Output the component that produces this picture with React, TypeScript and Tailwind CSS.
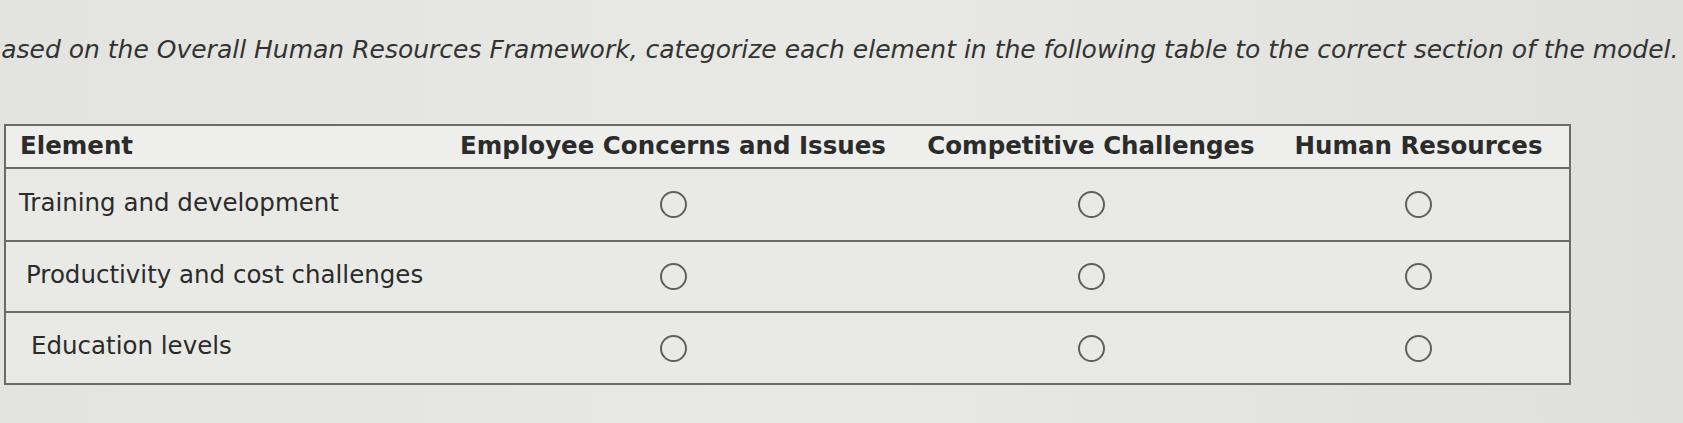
import React from "react";

const rows = [
  { label: "Training and development", h: "h-[73px]", pl: "pl-[13px]" },
  { label: "Productivity and cost challenges", h: "h-[71px]", pl: "pl-[20px]" },
  { label: "Education levels", h: "h-[70px]", pl: "pl-[25px]" },
];

function Radio() {
  return <span className="inline-block w-[27px] h-[27px] rounded-full border-[2px] border-[#5f5f5f]" />;
}

export default function App() {
  return (
    <div
      className="w-[1683px] h-[423px] overflow-hidden bg-gradient-to-r from-[#e3e3e0] via-[#e8e8e5] to-[#dfdfdb] text-[#2b2b2b]"
      style={{ fontFamily: '"DejaVu Sans", Verdana, sans-serif' }}
    >
      <div className="pt-[34px] ml-[-16px] whitespace-nowrap italic text-[25px] leading-[32px] text-[#333]">
        Based on the Overall Human Resources Framework, categorize each element in the following table to the correct section of the model.
      </div>
      <div className="mt-[58px] ml-[4px] w-[1567px] border-[2px] border-[#6a6a6a]">
        <div className="grid grid-cols-[432px_470px_366px_295px] h-[43px] items-center bg-[#eeeeec] font-bold text-[24.5px] border-b-[2px] border-[#6a6a6a]">
          <div className="pl-[14px]">Element</div>
          <div className="text-center">Employee Concerns and Issues</div>
          <div className="text-center">Competitive Challenges</div>
          <div className="text-center pr-[6px]">Human Resources</div>
        </div>
        {rows.map((r, i) => (
          <div
            key={r.label}
            className={`grid grid-cols-[432px_470px_366px_295px] items-center bg-[#e9e9e6] text-[24.5px] ${r.h} ${i < rows.length - 1 ? "border-b-[2px] border-[#6a6a6a]" : ""}`}
          >
            <div className={`${r.pl} -mt-[3px]`}>{r.label}</div>
            <div className="flex justify-center"><Radio /></div>
            <div className="flex justify-center"><Radio /></div>
            <div className="flex justify-center pr-[6px]"><Radio /></div>
          </div>
        ))}
      </div>
    </div>
  );
}
